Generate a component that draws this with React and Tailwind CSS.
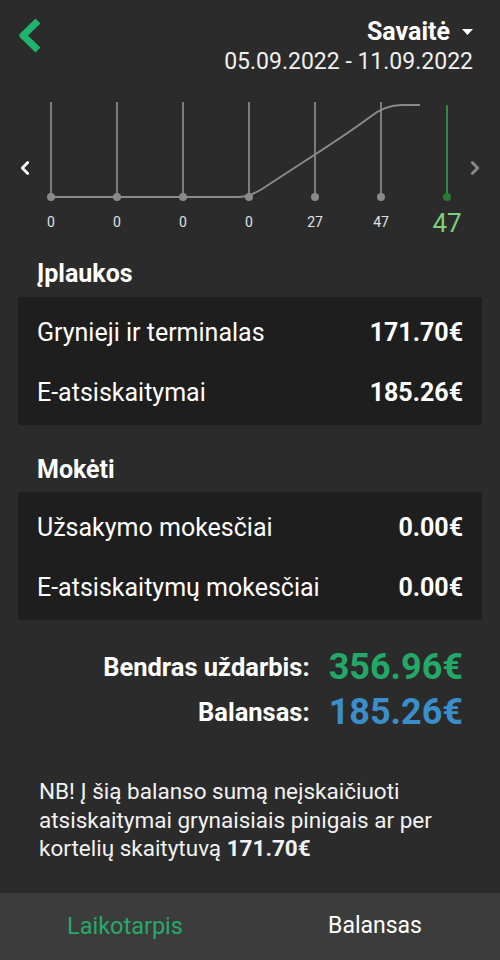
import React from "react";
import { ChevronLeft, ChevronRight } from "lucide-react";

const labels = ["0", "0", "0", "0", "27", "47", "47"];

const Chart = () => {
  return (
    <svg width="400" height="145" viewBox="0 0 400 145" className="overflow-visible">
      <defs>
        <linearGradient id="tail" x1="0" x2="1" y1="0" y2="0">
          <stop offset="0" stopColor="#8a8a8a" />
          <stop offset="1" stopColor="#2e8b3e" />
        </linearGradient>
      </defs>
      {labels.slice(0, 6).map((l, i) => (
        <g key={i}>
          <line x1={1 + i * 66} x2={1 + i * 66} y1="7" y2="102" stroke="#7c7c7c" strokeWidth="2" />
          <circle cx={1 + i * 66} cy="102" r="4" fill="#8a8a8a" />
          <text x={1 + i * 66} y="132" fill="#e0e0e0" fontSize="14" textAnchor="middle" fontFamily="Roboto, sans-serif">
            {l}
          </text>
        </g>
      ))}
      <path
        d="M1 102 L188 102 Q199 102 212 94 L255 66 Q300 37 320 22 Q335 10 352 10 L370 10"
        fill="none"
        stroke="#8a8a8a"
        strokeWidth="2"
      />
      <path d="M370 10 L397 10" stroke="url(#tail)" strokeWidth="2" />
      <line x1="397" x2="397" y1="10" y2="102" stroke="#2e8b3e" strokeWidth="2" />
      <circle cx="397" cy="102" r="4" fill="#2a7a34" />
      <text x="397" y="137" fill="#7ccf7a" fontSize="26" textAnchor="middle" fontFamily="Roboto, sans-serif">
        47
      </text>
    </svg>
  );
};

const Row = ({ label, value }) => (
  <div className="h-[60px] flex items-center justify-between">
    <span>{label}</span>
    <span className="font-bold">{value}</span>
  </div>
);

export default function App() {
  return (
    <div className="w-[500px] h-[960px] bg-[#2b2b2b] text-white flex flex-col font-['Roboto',sans-serif]">
      {/* header */}
      <div className="flex justify-between pl-[14px] pr-[27px] pt-[17px]">
        <svg width="30" height="40" viewBox="0 0 30 40" className="-mt-[2px]">
          <polyline points="24,6 9,20.5 24,35" fill="none" stroke="#1fb36d" strokeWidth="7" strokeLinejoin="round" />
        </svg>
        <div className="flex flex-col items-end">
          <div className="flex items-center gap-[12px] text-[25px] font-bold leading-[30px]">
            <span>Savaitė</span>
            <svg width="11" height="6" viewBox="0 0 11 6">
              <path d="M0 0 L11 0 L5.5 6 Z" fill="#ffffff" />
            </svg>
          </div>
          <div className="text-[23px] leading-[30px] text-[#f0f0f0]">05.09.2022 - 11.09.2022</div>
        </div>
      </div>

      {/* chart */}
      <div className="flex items-center mt-[18px]">
        <div className="w-[50px] flex justify-center">
          <ChevronLeft size={22} strokeWidth={3} color="#ffffff" />
        </div>
        <Chart />
        <div className="w-[50px] flex justify-center">
          <ChevronRight size={22} strokeWidth={3} color="#8a8a8a" />
        </div>
      </div>

      {/* income */}
      <div className="px-[18px] mt-[20px]">
        <div className="px-[19px] text-[25px] font-bold leading-[28px] mb-[9px]">Įplaukos</div>
        <div className="bg-[#1e1e1e] rounded-[2px] pl-[19px] pr-[19px] pt-[6px] pb-[2px] text-[25px]">
          <Row label="Grynieji ir terminalas" value="171.70€" />
          <Row label="E-atsiskaitymai" value="185.26€" />
        </div>

        <div className="px-[19px] text-[25px] font-bold leading-[28px] mb-[8px] mt-[31px]">Mokėti</div>
        <div className="bg-[#1e1e1e] rounded-[2px] pl-[19px] pr-[19px] pt-[6px] pb-[2px] text-[25px]">
          <Row label="Užsakymo mokesčiai" value="0.00€" />
          <Row label="E-atsiskaitymų mokesčiai" value="0.00€" />
        </div>
      </div>

      {/* totals */}
      <div className="flex flex-col items-end pr-[37px] mt-[26px] gap-[3px]">
        <div className="flex items-center gap-[19px]">
          <span className="text-[25.5px] font-bold">Bendras uždarbis:</span>
          <span className="text-[36px] font-bold text-[#22a968] leading-[42px]">356.96€</span>
        </div>
        <div className="flex items-center gap-[19px]">
          <span className="text-[25.5px] font-bold">Balansas:</span>
          <span className="text-[36px] font-bold text-[#3a8fca] leading-[42px]">185.26€</span>
        </div>
      </div>

      {/* note */}
      <p className="px-[39px] mt-[44px] text-[22.5px] leading-[28.5px] text-[#f2f2f2]">
        NB! Į šią balanso sumą neįskaičiuoti atsiskaitymai grynaisiais pinigais ar per kortelių skaitytuvą{" "}
        <span className="font-bold">171.70€</span>
      </p>

      {/* bottom tabs */}
      <div className="mt-auto h-[67px] bg-[#3c3c3c] flex">
        <button className="flex-1 text-[23.5px] text-[#27a96b]">Laikotarpis</button>
        <button className="flex-1 text-[23px] text-white">Balansas</button>
      </div>
    </div>
  );
}
